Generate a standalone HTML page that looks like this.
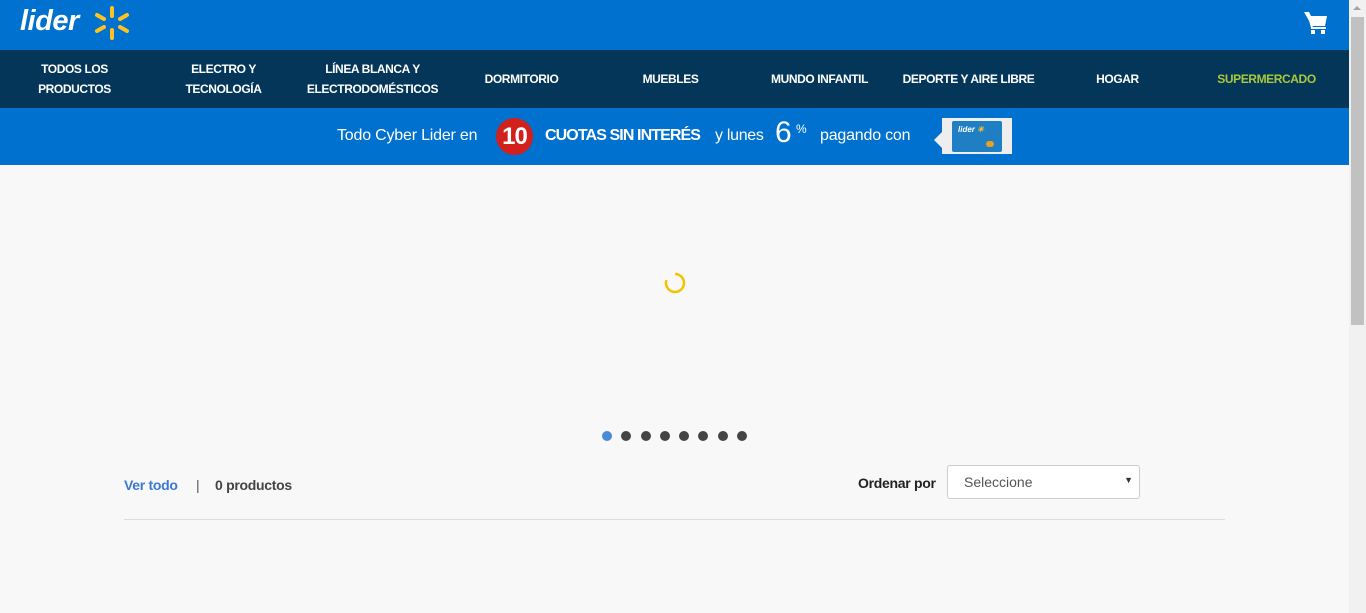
<!DOCTYPE html>
<html><head><meta charset="utf-8"><style>
*{margin:0;padding:0;box-sizing:border-box}
body{width:1366px;height:613px;overflow:hidden;background:#f8f8f8;font-family:"Liberation Sans",sans-serif;position:relative}
.top{position:absolute;left:0;top:0;width:1349px;height:50px;background:#0071ce}
.nav{position:absolute;left:0;top:50px;width:1349px;height:58px;background:#04365a}
.nav div{position:absolute;top:0;height:58px;display:flex;align-items:center;justify-content:center;text-align:center;color:#fff;font-size:12px;font-weight:bold;line-height:20px;letter-spacing:-0.4px}
.ban{position:absolute;left:0;top:108px;width:1349px;height:57px;background:#0071ce;color:#fff}
.ban span{white-space:nowrap}
.sb{position:absolute;right:0;top:0;width:17px;height:613px;background:#f1f1f1}
.thumb{position:absolute;right:2px;top:17px;width:13px;height:308px;background:#c1c1c1}
.dot{position:absolute;top:431px;width:10px;height:10px;border-radius:50%;background:#444}
</style></head><body>
<div class="top">
<div style="position:absolute;left:20px;top:5px;color:#fff;font-style:italic;font-weight:bold;font-size:29px;letter-spacing:-0.5px">lider</div>
<svg style="position:absolute;left:92px;top:5px" width="40" height="38" viewBox="0 0 40 38"><g stroke="#ffc220" stroke-width="4" stroke-linecap="round"><line x1="20" y1="3" x2="20" y2="11"/><line x1="20" y1="25" x2="20" y2="33"/><line x1="5" y1="10" x2="12" y2="14"/><line x1="35" y1="10" x2="28" y2="14"/><line x1="5" y1="26" x2="12" y2="22"/><line x1="35" y1="26" x2="28" y2="22"/></g></svg>
<svg style="position:absolute;left:1303px;top:10px" width="26" height="26" viewBox="0 0 26 26"><path d="M1 2h5l2 4h16l-2 10H9z" fill="#fff"/><path d="M5 2l4 16h14" stroke="#fff" stroke-width="2" fill="none"/><rect x="8" y="20" width="4" height="4" fill="#fff"/><rect x="18" y="20" width="4" height="4" fill="#fff"/></svg>
</div>
<div class="nav">
<div style="left:0;width:149px">TODOS LOS<br>PRODUCTOS</div>
<div style="left:149px;width:149px">ELECTRO Y<br>TECNOLOGÍA</div>
<div style="left:298px;width:149px">LÍNEA BLANCA Y<br>ELECTRODOMÉSTICOS</div>
<div style="left:447px;width:149px">DORMITORIO</div>
<div style="left:596px;width:149px">MUEBLES</div>
<div style="left:745px;width:149px">MUNDO INFANTIL</div>
<div style="left:894px;width:149px">DEPORTE Y AIRE LIBRE</div>
<div style="left:1043px;width:149px">HOGAR</div>
<div style="left:1192px;width:149px;color:#a8c93a">SUPERMERCADO</div>
</div>
<div class="ban">
<span style="position:absolute;left:337px;top:19px;font-size:16px;letter-spacing:-0.2px">Todo Cyber Lider en</span>
<div style="position:absolute;left:496px;top:10px;width:37px;height:37px;border-radius:50%;background:#d2201d;font-weight:bold;font-size:24px;text-align:center;line-height:37px;letter-spacing:-1px">10</div>
<span style="position:absolute;left:545px;top:19px;font-size:16px;font-weight:bold;letter-spacing:-0.9px">CUOTAS SIN INTERÉS</span>
<span style="position:absolute;left:715px;top:19px;font-size:16px;letter-spacing:-0.3px">y lunes</span>
<span style="position:absolute;left:775px;top:8px;font-size:30px">6</span>
<span style="position:absolute;left:796px;top:14px;font-size:12px">%</span>
<span style="position:absolute;left:820px;top:19px;font-size:16px;letter-spacing:-0.2px">pagando con</span>
<div style="position:absolute;left:934px;top:24px;width:0;height:0;border:8px solid transparent;border-right-color:#eee;border-left:0"></div>
<div style="position:absolute;left:942px;top:10px;width:70px;height:36px;background:#eee"><div style="position:absolute;left:10px;top:3px;width:50px;height:31px;background:#1e7fc4;border-radius:2px;font-size:8px;font-style:italic;font-weight:bold;padding:4px 0 0 6px">lider<span style="color:#ffc220"> ✳</span><div style="position:absolute;left:34px;top:20px;width:8px;height:6px;background:#e8a020;border-radius:3px"></div></div></div>
</div>
<svg style="position:absolute;left:664px;top:272px" width="22" height="22" viewBox="0 0 22 22"><path d="M11 2 A9 9 0 1 1 2.5 8" stroke="#f5c200" stroke-width="2.5" fill="none"/></svg>
<div class="dot" style="left:602px;background:#4a8bd6"></div>
<div class="dot" style="left:621px"></div><div class="dot" style="left:641px"></div><div class="dot" style="left:660px"></div><div class="dot" style="left:679px"></div><div class="dot" style="left:698px"></div><div class="dot" style="left:718px"></div><div class="dot" style="left:737px"></div>
<div style="position:absolute;left:124px;top:477px;font-size:14px;color:#3a7ad4;font-weight:bold;letter-spacing:-0.3px">Ver todo</div>
<div style="position:absolute;left:196px;top:477px;font-size:14px;color:#555">|</div>
<div style="position:absolute;left:215px;top:477px;font-size:14px;color:#444;font-weight:bold;letter-spacing:-0.3px">0 productos</div>
<div style="position:absolute;left:858px;top:475px;font-size:14px;color:#222;font-weight:bold;letter-spacing:-0.3px">Ordenar por</div>
<div style="position:absolute;left:947px;top:465px;width:193px;height:34px;background:#fff;border:1px solid #ccc;border-radius:3px;font-size:14px;color:#555;padding:8px 0 0 16px">Seleccione<span style="position:absolute;right:6px;top:9px;font-size:9px;color:#333">▼</span></div>
<div style="position:absolute;left:124px;top:519px;width:1101px;height:1px;background:#ddd"></div>
<div class="sb"><div class="thumb"></div><div style="position:absolute;left:4px;top:6px;border:4px solid transparent;border-bottom:4px solid #a3a3a3;border-top:0"></div></div>
</body></html>
